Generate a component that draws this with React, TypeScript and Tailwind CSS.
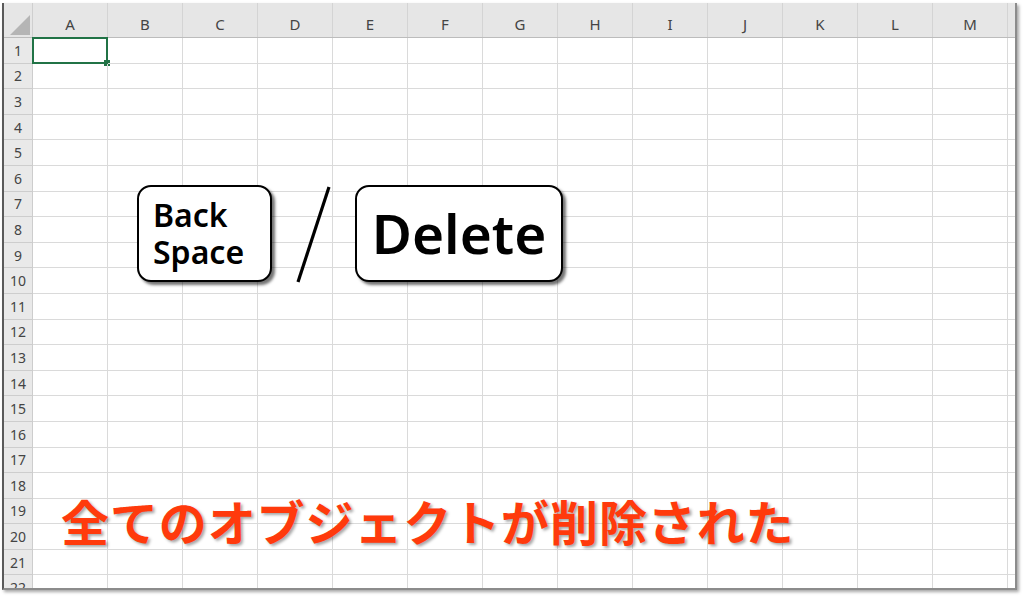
const columns = ["A", "B", "C", "D", "E", "F", "G", "H", "I", "J", "K", "L", "M"];
const rows = Array.from({ length: 22 }, (_, i) => i + 1);

function App() {
  return (
    <div className="relative w-[1024px] h-[597px] overflow-hidden bg-white font-['Noto_Sans','Noto_Sans_CJK_JP',sans-serif]">
      {/* sheet frame */}
      <div className="absolute left-[2px] top-[3px] w-[1015px] h-[587px] border-l-2 border-[#5a5a5a] border-r-2 border-b-2 border-r-[#8c8c8c] border-b-[#8c8c8c] shadow-[2px_2px_3px_rgba(0,0,0,0.35)] overflow-hidden flex flex-col">
        {/* column header */}
        <div className="flex h-[35px] shrink-0 bg-[#e6e6e6] border-b border-[#bcbcbc]">
          <div className="relative w-[29px] shrink-0 border-r border-[#cfcfcf]">
            <svg className="absolute right-[2px] bottom-[2px]" width="20" height="20" viewBox="0 0 20 20">
              <polygon points="0,20 20,20 20,0" fill="#b5b5b5" />
            </svg>
          </div>
          {columns.map((c) => (
            <div
              key={c}
              className="w-[75px] shrink-0 flex items-end justify-center pb-[2px] border-r border-[#d4d4d4] text-[15px] text-[#444]"
            >
              {c}
            </div>
          ))}
          <div className="flex-1" />
        </div>

        {/* rows */}
        {rows.map((r) => (
          <div key={r} className="flex h-[25.6px] shrink-0">
            <div className="w-[29px] shrink-0 flex items-center justify-center bg-[#e9e9e9] border-r border-b border-[#cdcdcd] text-[14px] text-[#444]">
              {r}
            </div>
            {columns.map((c) => (
              <div key={c} className="relative w-[75px] shrink-0 border-r border-b border-[#dadada]">
                {r === 1 && c === "A" && (
                  <div className="absolute left-[-1px] top-[-1px] right-[-1px] bottom-[-1px] border-2 border-[#217346]">
                    <div className="absolute right-[-4px] bottom-[-4px] w-[6px] h-[6px] bg-[#217346]" />
                  </div>
                )}
              </div>
            ))}
            <div className="flex-1 border-b border-[#dadada]" />
          </div>
        ))}
      </div>

      {/* Back Space key */}
      <div className="absolute left-[137px] top-[185px] w-[135px] h-[97px] rounded-[14px] border-2 border-black bg-white shadow-[3px_3px_3px_rgba(0,0,0,0.55)] pl-[14px] pt-[9px] text-[32px] leading-[37px] font-semibold text-black">
        Back
        <br />
        Space
      </div>

      {/* slash */}
      <svg className="absolute left-[290px] top-[182px]" width="48" height="106" viewBox="0 0 48 106">
        <line x1="39" y1="5" x2="8" y2="100" stroke="black" strokeWidth="3.2" />
      </svg>

      {/* Delete key */}
      <div className="absolute left-[355px] top-[185px] w-[208px] h-[97px] rounded-[14px] border-2 border-black bg-white shadow-[3px_3px_3px_rgba(0,0,0,0.55)] flex items-center justify-center text-[55px] font-semibold text-black">
        Delete
      </div>

      {/* message */}
      <div className="absolute left-[61px] top-[496px] text-[48px] leading-[48px] tracking-[0.9px] font-bold text-[#ff3a0c] [text-shadow:2px_2px_3px_rgba(0,0,0,0.35)] font-['Noto_Sans_CJK_JP',sans-serif] whitespace-nowrap">
        全てのオブジェクトが削除された
      </div>
    </div>
  );
}

export default App;
